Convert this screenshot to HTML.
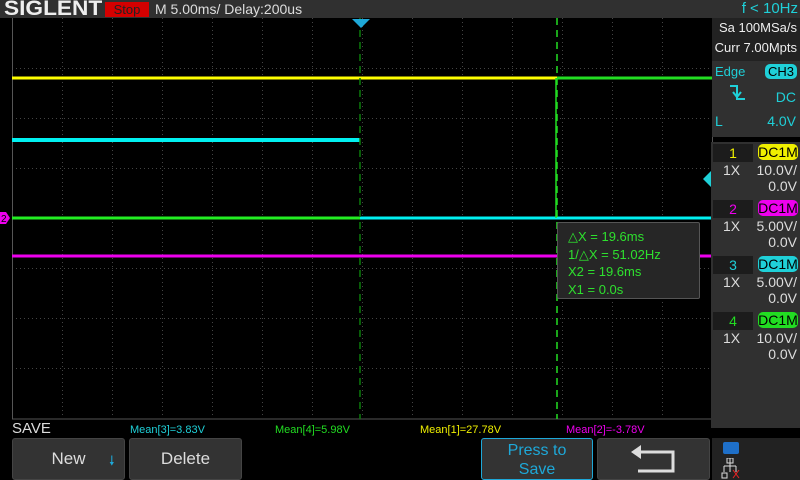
<!DOCTYPE html>
<html><head><meta charset="utf-8"><style>
html,body{margin:0;width:800px;height:480px;background:#000;overflow:hidden;font-family:"Liberation Sans",sans-serif;position:relative}
.a{position:absolute}
.btn{position:absolute;box-sizing:border-box;background:#333;border:1px solid #444;border-radius:3px;color:#ddd;font-size:16px;text-align:center}
.chp{position:absolute;left:711px;width:89px;height:64px;background:#303030}
.chn{position:absolute;left:2px;top:2px;width:40px;height:18px;background:#1c1c1c;font-size:14px;text-align:center;line-height:18px}
.chc{position:absolute;right:2px;top:2px;width:40px;height:16px;border-radius:5px;color:#000;font-size:14px;text-align:center;line-height:16px}
.r{position:absolute;right:3px;color:#ddd;font-size:14px}
</style></head><body>
<div class="a" style="left:0;top:0;width:800px;height:18px;background:#303030"></div>
<div class="a" style="left:4px;top:-3px;color:#eee;font-size:21px;font-weight:bold;transform:scaleX(1.08);transform-origin:left">SIGLENT</div>
<div class="a" style="left:105px;top:2px;width:44px;height:15px;background:#d40000;color:#222;font-size:13px;text-align:center;line-height:15px">Stop</div>
<div class="a" style="left:155px;top:1px;color:#ddd;font-size:14px">M 5.00ms/ Delay:200us</div>
<div class="a" style="right:2px;top:0px;color:#1fd0d8;font-size:15px">f &lt; 10Hz</div>

<svg class="a" style="left:0;top:0" width="800" height="480">
<g stroke="#444" stroke-width="1" stroke-dasharray="1,3">
<path d="M62.5 18V418M112.5 18V418M162.5 18V418M212.5 18V418M262.5 18V418M312.5 18V418M362.5 18V418M412.5 18V418M462.5 18V418M512.5 18V418M562.5 18V418M612.5 18V418M662.5 18V418"/>
<path d="M12 68.5H712M12 118.5H712M12 168.5H712M12 218.5H712M12 268.5H712M12 318.5H712M12 368.5H712"/>
</g>
<path d="M12.5 18V419H712.5V18" stroke="#555" fill="none"/>
<path d="M12 78H712" stroke="#ffff00" stroke-width="3"/>
<path d="M557 78H712" stroke="#22dd22" stroke-width="3"/>
<path d="M12 140H360" stroke="#00f0f0" stroke-width="4"/>
<path d="M12 218H360" stroke="#22ee22" stroke-width="3"/>
<path d="M360 218H712" stroke="#00f0f0" stroke-width="3"/>
<path d="M12 256H712" stroke="#ee00ee" stroke-width="3"/>
<path d="M360 18V419" stroke="#0a7a0a" stroke-width="1.5" stroke-dasharray="7,5"/>
<path d="M557 18V419" stroke="#22dd22" stroke-width="1.5" stroke-dasharray="7,5"/>
<path d="M556 78V218" stroke="#22dd22" stroke-width="1.5"/>
<path d="M352 19H370L361 28Z" fill="#1ea8d8"/>
<path d="M712 170V188L703 179Z" fill="#1fd0d8"/>
<path d="M0 212H6L10 218L6 224H0Z" fill="#ee00ee"/>
<text x="1" y="222" font-size="10" fill="#000" font-family="Liberation Sans">2</text>
</svg>

<div class="a" style="left:557px;top:222px;width:143px;height:77px;background:#262626;border:1px solid #555;border-radius:2px;color:#2ee02e;font-size:13px;line-height:17.5px;padding:5px 0 0 10px;box-sizing:border-box">△X = 19.6ms<br>1/△X = 51.02Hz<br>X2 = 19.6ms<br>X1 = 0.0s</div>

<div class="a" style="left:712px;top:18px;width:88px;height:44px;background:#222"></div>
<div class="a" style="right:3px;top:20px;color:#eee;font-size:13px">Sa 100MSa/s</div>
<div class="a" style="right:3px;top:40px;color:#eee;font-size:13px">Curr 7.00Mpts</div>
<div class="a" style="left:712px;top:61px;width:88px;height:76px;background:#303030"></div>
<div class="a" style="left:715px;top:64px;color:#1fd0d8;font-size:13px">Edge</div>
<div class="a" style="left:765px;top:64px;width:32px;height:15px;background:#1fd0d8;border-radius:5px;color:#000;font-size:13px;text-align:center;line-height:15px">CH3</div>
<svg class="a" style="left:728px;top:84px" width="20" height="18"><path d="M2 2H9V15H17M5 8L9 13L13 8" stroke="#1fd0d8" stroke-width="2" fill="none"/></svg>
<div class="a" style="right:4px;top:89px;color:#1fd0d8;font-size:14px">DC</div>
<div class="a" style="left:715px;top:113px;color:#1fd0d8;font-size:14px">L</div>
<div class="a" style="right:4px;top:113px;color:#1fd0d8;font-size:14px">4.0V</div>

<div class="chp" style="top:142px"><div class="chn" style="color:#f0f000">1</div><div class="chc" style="background:#f0f000">DC1M</div><div class="a" style="left:12px;top:20px;color:#ddd;font-size:14px">1X</div><div class="r" style="top:20px">10.0V/</div><div class="r" style="top:36px">0.0V</div></div>
<div class="chp" style="top:198px"><div class="chn" style="color:#ee00ee">2</div><div class="chc" style="background:#ee00ee">DC1M</div><div class="a" style="left:12px;top:20px;color:#ddd;font-size:14px">1X</div><div class="r" style="top:20px">5.00V/</div><div class="r" style="top:36px">0.0V</div></div>
<div class="chp" style="top:254px"><div class="chn" style="color:#1fd0d8">3</div><div class="chc" style="background:#1fd0d8">DC1M</div><div class="a" style="left:12px;top:20px;color:#ddd;font-size:14px">1X</div><div class="r" style="top:20px">5.00V/</div><div class="r" style="top:36px">0.0V</div></div>
<div class="chp" style="top:310px"><div class="chn" style="color:#22dd22">4</div><div class="chc" style="background:#22dd22">DC1M</div><div class="a" style="left:12px;top:20px;color:#ddd;font-size:14px">1X</div><div class="r" style="top:20px">10.0V/</div><div class="r" style="top:36px">0.0V</div></div>
<div class="a" style="left:711px;top:366px;width:89px;height:62px;background:#303030"></div>

<div class="a" style="left:12px;top:420px;color:#ddd;font-size:15px">SAVE</div>
<div class="a" style="left:130px;top:424px;color:#1fd0d8;font-size:11px">Mean[3]=3.83V</div>
<div class="a" style="left:275px;top:424px;color:#22dd22;font-size:11px">Mean[4]=5.98V</div>
<div class="a" style="left:420px;top:424px;color:#f0f000;font-size:11px">Mean[1]=27.78V</div>
<div class="a" style="left:566px;top:424px;color:#ee00ee;font-size:11px">Mean[2]=-3.78V</div>

<div class="btn" style="left:12px;top:438px;width:113px;height:42px;line-height:40px;font-size:17px">New<span style="position:absolute;left:96px;top:2px;color:#1ea8d8;font-size:13px">🠗</span></div>
<div class="btn" style="left:129px;top:438px;width:113px;height:42px;line-height:40px;font-size:17px">Delete</div>
<div class="btn" style="left:481px;top:438px;width:112px;height:42px;border-color:#1ea8d8;color:#1ea8d8;line-height:19px;padding-top:2px;font-size:16px">Press to<br>Save</div>
<div class="btn" style="left:597px;top:438px;width:113px;height:42px"><svg width="111" height="40" style="display:block"><path d="M40 13H75V32H40" stroke="#ddd" stroke-width="3" fill="none"/><path d="M33 13L43 6V20Z" fill="#ddd"/></svg></div>
<div class="a" style="left:712px;top:438px;width:88px;height:42px;background:#222"></div>
<div class="a" style="left:723px;top:442px;width:16px;height:12px;background:#1e6fc8;border-radius:2px"></div>
<svg class="a" style="left:720px;top:458px" width="20" height="22"><path d="M10 0V14M4 8H16M4 8V14M16 8V14" stroke="#ddd" fill="none"/><rect x="7" y="0" width="6" height="5" fill="none" stroke="#ddd"/><rect x="2" y="15" width="5" height="5" fill="none" stroke="#ddd"/><path d="M13 12L19 20M19 12L13 20" stroke="#e22"/></svg>
</body></html>
